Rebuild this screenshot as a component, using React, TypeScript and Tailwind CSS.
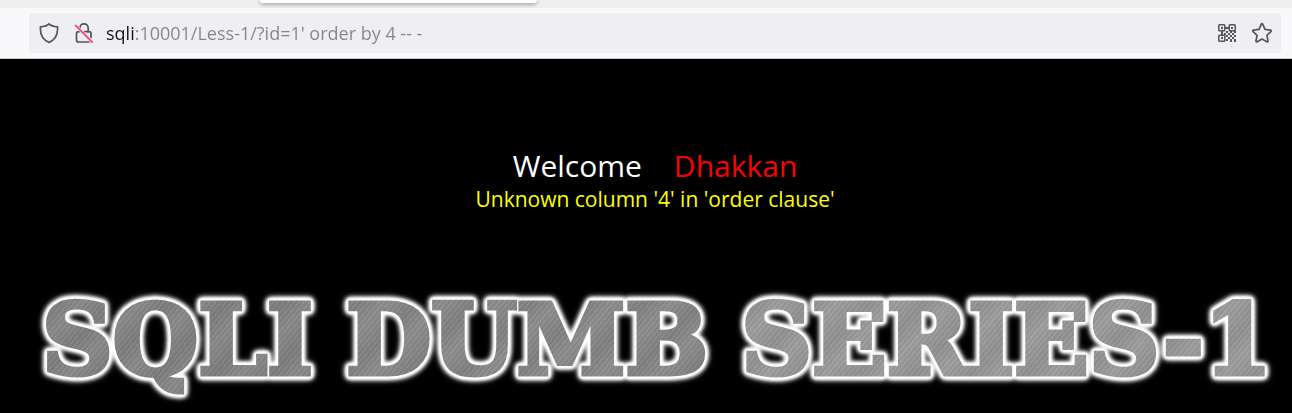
import React from "react";

function ShieldIcon() {
  return (
    <svg viewBox="0 0 20 22" className="h-[22px] w-5" fill="none" stroke="#55545c" strokeWidth="1.7" strokeLinejoin="round" aria-hidden="true">
      <path d="M10 1.8C8.6 3.2 4.9 4.5 1.5 4.9C1 10.5 2 17 10 20.4C18 17 19 10.5 18.5 4.9C15.1 4.5 11.4 3.2 10 1.8Z" />
    </svg>
  );
}

function InsecureLockIcon() {
  return (
    <svg viewBox="0 0 20 22" className="h-[22px] w-5" fill="none" strokeLinecap="round" aria-hidden="true">
      <g stroke="#55545c" strokeWidth="1.7">
        <path d="M5.8 6.4C5.8 3.4 7.5 1.8 10 1.8C12.5 1.8 14.2 3.4 14.2 6.4V9.6H15C16.2 9.6 17 10.4 17 11.6V15.5" />
        <path d="M10.5 9.6H14.2" />
        <path d="M6 9.6H4.6C3.3 9.6 2.5 10.4 2.5 11.6V18C2.5 19.2 3.3 20 4.6 20H15" />
      </g>
      <path d="M2.6 4.4L17 19" stroke="#efeff3" strokeWidth="3" />
      <path d="M1.6 3.4L18.2 20.2" stroke="#f8416a" strokeWidth="1.7" />
    </svg>
  );
}

function QrIcon() {
  return (
    <svg viewBox="0 0 18 18" className="size-[18px]" fill="#55545c" aria-hidden="true">
      <g fill="none" stroke="#55545c" strokeWidth="1.5">
        <rect x="0.8" y="0.8" width="6" height="6" rx="0.8" />
        <rect x="11.2" y="0.8" width="6" height="6" rx="0.8" />
        <rect x="0.8" y="11.2" width="6" height="6" rx="0.8" />
      </g>
      <path d="M3 3h2v2H3zM13 3h2v2h-2zM3 13h2v2H3zM7 3h4v2H7zM3 7h2v4H3zM8 7h2v2H8zM6 9h2v2H6zM10 9h2v2h-2zM12 7h2v2h-2zM14 9h2v2h-2zM16 7h2v2h-2zM8 11h2v2H8zM12 11h2v2h-2zM16 11h2v2h-2zM10 13h2v2h-2zM14 13h2v2h-2zM8 15h2v2H8zM12 15h2v3h-2zM16 15h2v3h-2z" />
    </svg>
  );
}

function StarIcon() {
  return (
    <svg viewBox="0 0 22 22" className="size-[22px]" fill="none" stroke="#55545c" strokeWidth="1.7" strokeLinejoin="round" aria-hidden="true">
      <path d="M10.2 2.4Q11 1 11.8 2.4L14 7.4L19.5 8.1Q20.9 8.5 19.9 9.6L15.9 13.3L17 18.8Q17.1 20.3 15.8 19.7L11 17L6.2 19.7Q4.9 20.3 5 18.8L6.1 13.3L2.1 9.6Q1.1 8.5 2.5 8.1L8 7.4Z" />
    </svg>
  );
}

function BrowserBar() {
  return (
    <header>
      <div className="h-2 overflow-hidden bg-[#efefef] pl-[260px]">
        <div className="h-[3px] w-[277px] rounded-b bg-white shadow-[0_1px_4px_rgba(0,0,0,0.45)]" />
      </div>
      <div className="border-b border-[#c9c9cd] bg-[#f9f9fb] pt-[5px] pr-[11px] pb-[5px] pl-[29px]">
        <div className="flex h-10 items-center rounded bg-[#efeff3] pr-2 pl-[10px]">
          <button type="button" aria-label="Tracking protection" className="mr-[15px]">
            <ShieldIcon />
          </button>
          <button type="button" aria-label="Connection is not secure" className="mr-3">
            <InsecureLockIcon />
          </button>
          <input
            type="text"
            aria-label="Address"
            defaultValue="sqli:10001/Less-1/?id=1' order by 4 -- -"
            className="min-w-0 flex-1 bg-[linear-gradient(90deg,#15141a_28px,#85848c_28px)] bg-clip-text font-['Open_Sans',sans-serif] text-[18px] leading-6 text-transparent outline-none"
          />
          <button type="button" aria-label="QR code" className="mr-[15px]">
            <QrIcon />
          </button>
          <button type="button" aria-label="Bookmark this page">
            <StarIcon />
          </button>
        </div>
      </div>
    </header>
  );
}

const metal =
  "bg-clip-text text-transparent [-webkit-text-stroke:5px_transparent] bg-[repeating-linear-gradient(130deg,rgba(255,255,255,0.09)_0px,transparent_1px,rgba(0,0,0,0.07)_3px,transparent_4px),repeating-linear-gradient(134deg,rgba(255,255,255,0.05)_0px,rgba(0,0,0,0.05)_23px,rgba(255,255,255,0.05)_41px)]";

const glow =
  "[filter:drop-shadow(0_0_1px_#fff)_drop-shadow(0_0_1px_#fff)_drop-shadow(0_0_1px_#fff)_drop-shadow(0_0_1px_#fff)_drop-shadow(0_0_2px_#fff)_drop-shadow(0_0_2px_#fff)]";

export default function App() {
  return (
    <div className="flex min-h-screen flex-col bg-black">
      <BrowserBar />
      <main className="flex flex-col">
        <div className="pt-[86px] pl-[18px] text-center font-['Open_Sans',sans-serif]">
          <p className="flex justify-center gap-8 text-[30px] leading-[42px] text-white">
            <span>Welcome</span>
            <span className="text-[#ff0000]">Dhakkan</span>
          </p>
          <p className="text-[21px] leading-6 text-[#ffff00]">Unknown column '4' in 'order clause'</p>
        </div>
        <h1
          className={`mt-[73px] flex justify-between pr-5 pl-[42px] font-['DejaVu_Serif',serif] text-[98px] leading-[112px] font-bold ${glow}`}
        >
          <span className={`${metal} bg-[#868686]`}>SQLI</span>
          <span className={`${metal} bg-[#8a8a8a]`}>DUMB</span>
          <span className={`${metal} bg-[#9b9b9b]`}>SERIES-1</span>
        </h1>
      </main>
    </div>
  );
}
